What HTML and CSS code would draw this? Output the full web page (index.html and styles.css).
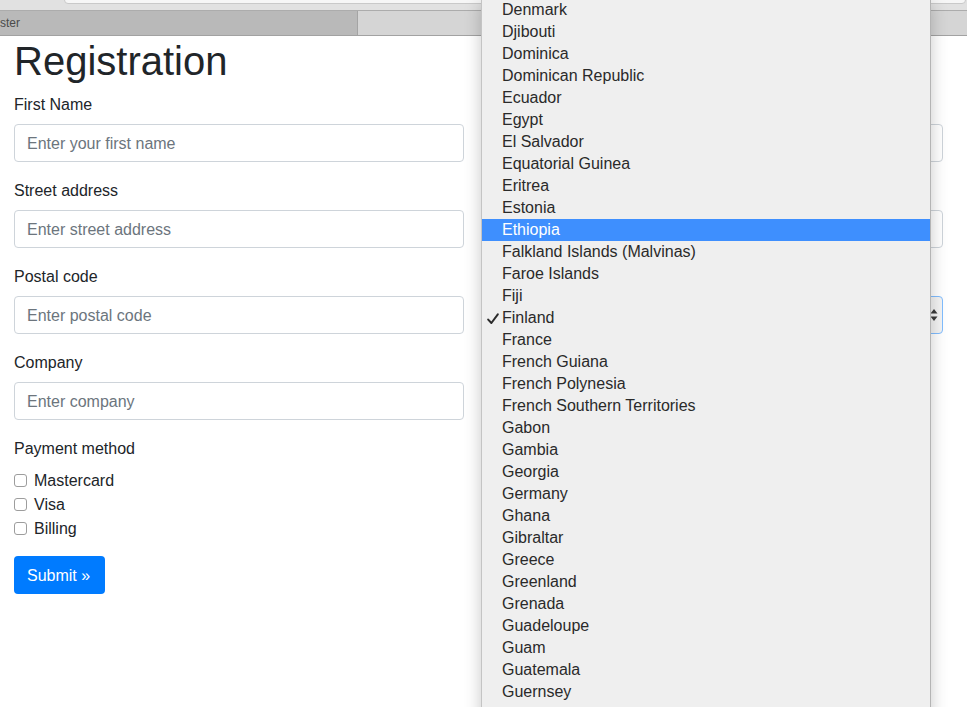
FILE: index.html
```html
<!DOCTYPE html>
<html>
<head>
<meta charset="utf-8">
<title>Register</title>
<link rel="stylesheet" href="styles.css">
</head>
<body>
<div class="chrome">
  <div class="toolbar"><div class="address"></div></div>
  <div class="tabs">
    <div class="tab tab-active"><span class="tab-title">ster</span></div>
    <div class="tab tab-rest"></div>
  </div>
</div>

<main class="page">
  <h1 class="title">Registration</h1>
  <form class="grid">
    <div class="col">
      <div class="group">
        <label class="label">First Name</label>
        <div class="input"><span class="ph">Enter your first name</span></div>
      </div>
      <div class="group">
        <label class="label">Street address</label>
        <div class="input"><span class="ph">Enter street address</span></div>
      </div>
      <div class="group">
        <label class="label">Postal code</label>
        <div class="input"><span class="ph">Enter postal code</span></div>
      </div>
      <div class="group">
        <label class="label">Company</label>
        <div class="input"><span class="ph">Enter company</span></div>
      </div>
      <div class="group group-checks">
        <label class="label">Payment method</label>
        <div class="check"><span class="box"></span><span>Mastercard</span></div>
        <div class="check"><span class="box"></span><span>Visa</span></div>
        <div class="check"><span class="box"></span><span>Billing</span></div>
      </div>
      <div class="btn">Submit »</div>
    </div>
    <div class="col">
      <div class="group">
        <label class="label">&nbsp;</label>
        <div class="input"></div>
      </div>
      <div class="group">
        <label class="label">&nbsp;</label>
        <div class="input"></div>
      </div>
      <div class="group">
        <label class="label">&nbsp;</label>
        <div class="input select">
          <svg class="arrows" width="8" height="14" viewBox="0 0 8 14"><path d="M4 1 L7.5 5.5 L0.5 5.5 Z M4 13 L7.5 8.5 L0.5 8.5 Z" fill="#3a3a3a"/></svg>
        </div>
      </div>
    </div>
  </form>
</main>

<div class="menu">
  <div class="item">Denmark</div>
  <div class="item">Djibouti</div>
  <div class="item">Dominica</div>
  <div class="item">Dominican Republic</div>
  <div class="item">Ecuador</div>
  <div class="item">Egypt</div>
  <div class="item">El Salvador</div>
  <div class="item">Equatorial Guinea</div>
  <div class="item">Eritrea</div>
  <div class="item">Estonia</div>
  <div class="item item-hl">Ethiopia</div>
  <div class="item">Falkland Islands (Malvinas)</div>
  <div class="item">Faroe Islands</div>
  <div class="item">Fiji</div>
  <div class="item item-checked"><svg class="tick" width="12" height="12" viewBox="0 0 12 12"><path d="M1.2 6.6 L4.4 10 L10.8 1.4" fill="none" stroke="#2b2b2b" stroke-width="2" stroke-linecap="round" stroke-linejoin="round"/></svg>Finland</div>
  <div class="item">France</div>
  <div class="item">French Guiana</div>
  <div class="item">French Polynesia</div>
  <div class="item">French Southern Territories</div>
  <div class="item">Gabon</div>
  <div class="item">Gambia</div>
  <div class="item">Georgia</div>
  <div class="item">Germany</div>
  <div class="item">Ghana</div>
  <div class="item">Gibraltar</div>
  <div class="item">Greece</div>
  <div class="item">Greenland</div>
  <div class="item">Grenada</div>
  <div class="item">Guadeloupe</div>
  <div class="item">Guam</div>
  <div class="item">Guatemala</div>
  <div class="item">Guernsey</div>
  <div class="item">Guinea</div>
</div>
</body>
</html>
```

FILE: styles.css
```css
html, body {
  margin: 0;
  padding: 0;
  background: #fff;
  overflow: hidden;
}
body {
  font-family: "Liberation Sans", Arial, sans-serif;
  color: #212529;
  font-size: 16px;
  line-height: 24px;
  width: 967px;
  height: 707px;
  position: relative;
}

/* browser chrome */
.chrome {
  height: 36px;
  background: #e1e1e1;
}
.toolbar {
  height: 10px;
  border-bottom: 1px solid #acacac;
  position: relative;
  overflow: hidden;
}
.address {
  margin-left: 64px;
  margin-top: -10px;
  height: 12px;
  width: 900px;
  background: #f6f6f6;
  border: 1px solid #c9c9c9;
  border-radius: 4px;
}
.tabs {
  display: flex;
  height: 24px;
  border-bottom: 1px solid #a2a2a2;
}
.tab-active {
  width: 357px;
  background: #b9b9b9;
  border-right: 1px solid #a4a4a4;
  display: flex;
  align-items: center;
}
.tab-title {
  font-size: 12px;
  color: #4b4b4b;
  line-height: 14px;
}
.tab-rest {
  flex: 1;
  background: #d5d5d5;
}

/* page */
.page {
  padding: 0 24px 0 14px;
}
.title {
  margin: 0 0 8px;
  padding-top: 1px;
  height: 47px;
  font-size: 40px;
  line-height: 48px;
  font-weight: 500;
  color: #212529;
}
.grid {
  display: grid;
  grid-template-columns: 1fr 1fr;
  column-gap: 30px;
}
.group {
  margin-bottom: 16px;
}
.label {
  display: block;
  padding-top: 1px;
  height: 23px;
  margin-bottom: 8px;
}
.input {
  height: 38px;
  box-sizing: border-box;
  border: 1px solid #ced4da;
  border-radius: 4px;
  padding: 2px 12px 0;
  display: flex;
  align-items: center;
}
.ph {
  color: #6c757d;
}
.select {
  border-color: #80bdff;
  background: #f4f4f4;
  justify-content: flex-end;
  padding: 0 4px 0 12px;
}
.arrows {
  display: block;
}
.check {
  display: flex;
  align-items: center;
  height: 24px;
  padding-top: 1px;
  box-sizing: border-box;
}
.box {
  width: 13px;
  height: 13px;
  border: 1px solid #9d9d9d;
  border-radius: 3px;
  background: #fff;
  margin-right: 7px;
  box-sizing: border-box;
}
.btn {
  display: inline-block;
  background: #007bff;
  color: #fff;
  border-radius: 4px;
  padding: 8px 13px 6px;
  line-height: 24px;
  height: 38px;
  box-sizing: border-box;
  width: 91px;
}

/* open select menu */
.menu {
  position: absolute;
  left: 481px;
  top: -1px;
  width: 450px;
  height: 740px;
  box-sizing: border-box;
  background: #efefef;
  border-left: 1px solid #c4c4c4;
  border-right: 1px solid #b4b4b4;
  box-shadow: 0 4px 16px rgba(0,0,0,0.22);
  color: #2a2a2a;
  font-size: 16px;
}
.item {
  height: 22px;
  line-height: 22px;
  padding-left: 20px;
  position: relative;
  white-space: nowrap;
}
.item-hl {
  background: #3e8ffe;
  color: #fff;
}
.tick {
  position: absolute;
  left: 5px;
  top: 6px;
}
```
